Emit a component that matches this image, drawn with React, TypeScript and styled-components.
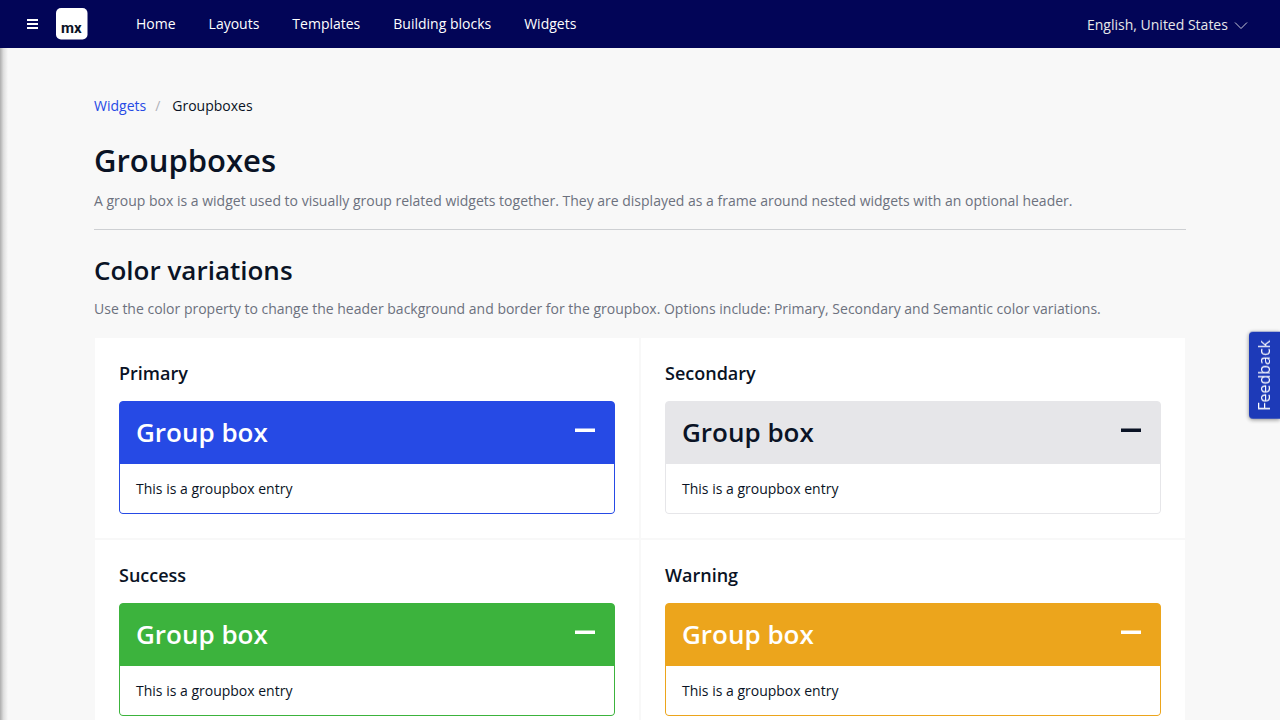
import React from 'react';
import styled, { createGlobalStyle } from 'styled-components';

const GlobalStyle = createGlobalStyle`
  *, *::before, *::after { box-sizing: border-box; }
  body {
    margin: 0;
    background: #f8f8f8;
    color: #0a1325;
    font-family: "Open Sans", "Noto Sans", sans-serif;
    font-size: 14px;
    line-height: 20px;
  }
  h1, h2, h3, h4, p, ol { margin: 0; padding: 0; }
  button, select { font: inherit; color: inherit; }
`;

const TopBar = styled.header`
  position: sticky;
  top: 0;
  z-index: 2;
  display: flex;
  align-items: center;
  height: 48px;
  padding: 0 32px 0 24px;
  background: #020557;
  color: #fff;
`;

const MenuButton = styled.button`
  display: flex;
  width: 16px;
  padding: 0;
  border: 0;
  background: none;
  justify-content: center;
`;

const HomeLink = styled.a`
  display: flex;
  margin: 0 32px 0 16px;
`;

const LogoText = styled.text`
  font-family: Roboto, sans-serif;
  font-size: 15px;
  font-weight: 700;
  fill: #0a1325;
`;

const Nav = styled.nav`
  display: flex;
  flex: 1;
  gap: 1px;
`;

const NavLink = styled.a`
  padding: 0 16px;
  color: #fff;
  text-decoration: none;
`;

const Language = styled.label`
  display: flex;
  align-items: center;
  gap: 6px;
  padding-top: 2px;
`;

const LanguageSelect = styled.select`
  appearance: none;
  padding: 0;
  border: 0;
  background: none;
  color: #e7e7e9;

  option { color: #0a1325; }
`;

const Body = styled.div`
  position: relative;
`;

const SidebarShadow = styled.div`
  position: absolute;
  inset: 0 auto 0 0;
  width: 8px;
  background: linear-gradient(to right, rgba(0, 0, 0, 0.3), rgba(0, 0, 0, 0.1) 45%, transparent);
`;

const Content = styled.main`
  max-width: 1140px;
  margin: 0 auto;
  padding: 48px 24px 24px;
`;

const Breadcrumb = styled.ol`
  display: flex;
  list-style: none;
  margin-bottom: 24px;
`;

const Crumb = styled.li`
  & + &::before {
    content: "/";
    padding: 0 12px 0 9px;
    color: #b0b2b8;
  }
`;

const CrumbLink = styled.a`
  color: #264ae5;
  text-decoration: none;
`;

const PageTitle = styled.h1`
  font-size: 31px;
  line-height: 40px;
  font-weight: 600;
`;

const SectionTitle = styled.h2`
  font-size: 26px;
  line-height: 35px;
  font-weight: 600;
`;

const Lead = styled.p`
  margin-top: 11px;
  color: #6c717e;
`;

const PageHead = styled.div`
  padding-bottom: 18px;
  margin-bottom: 23px;
  border-bottom: 1px solid #ced0d3;
`;

const Cards = styled.div`
  display: grid;
  grid-template-columns: repeat(2, minmax(0, 1fr));
  margin-top: 18px;
`;

const Card = styled.section`
  padding: 24px;
  border: 1px solid #f8f8f8;
  background: #fff;
`;

const CardTitle = styled.h3`
  margin-bottom: 16px;
  font-size: 18px;
  line-height: 23px;
  font-weight: 600;
`;

const Box = styled.div<{ $color: string }>`
  border: 1px solid ${(p) => p.$color};
  border-radius: 4px;
  background: ${(p) => p.$color};
  overflow: hidden;
`;

const BoxHeader = styled.button<{ $text: string }>`
  display: flex;
  justify-content: space-between;
  align-items: center;
  width: 100%;
  padding: 13px 16px 15px;
  border: 0;
  background: none;
  color: ${(p) => p.$text};
  font-size: 26px;
  line-height: 34px;
  font-weight: 600;
  text-align: left;
`;

const MinusIcon = styled.svg`
  margin: 0 3px 4px 0;
  fill: currentColor;
`;

const BoxBody = styled.p`
  padding: 15px 16px 14px;
  background: #fff;
`;

const Feedback = styled.button`
  position: fixed;
  right: 0;
  top: 332px;
  z-index: 3;
  padding: 8px 4px 8px 5px;
  border: 0;
  border-radius: 0 4px 4px 0;
  background: #1d3ab8;
  color: #fff;
  font-size: 16px;
  line-height: 22px;
  writing-mode: vertical-rl;
  transform: rotate(180deg);
  box-shadow: 0 -1px 4px rgba(0, 0, 0, 0.45);
`;

const links = ['Home', 'Layouts', 'Templates', 'Building blocks', 'Widgets'];

const variations = [
  { name: 'Primary', color: '#264ae5', text: '#fff' },
  { name: 'Secondary', color: '#e6e6e9', text: '#0a1325' },
  { name: 'Success', color: '#3cb33d', text: '#fff' },
  { name: 'Warning', color: '#eca51c', text: '#fff' },
];

function GroupBox({ color, text }: { color: string; text: string }) {
  const [open, setOpen] = React.useState(true);
  return (
    <Box $color={color}>
      <BoxHeader $text={text} aria-expanded={open} onClick={() => setOpen(!open)}>
        Group box
        <MinusIcon width="20" height="4" viewBox="0 0 20 4">
          <path d="M0 .5h20V4H0z" />
        </MinusIcon>
      </BoxHeader>
      {open && <BoxBody>This is a groupbox entry</BoxBody>}
    </Box>
  );
}

export default function App() {
  return (
    <>
      <GlobalStyle />
      <TopBar>
        <MenuButton aria-label="Toggle menu">
          <svg width="12" height="12" viewBox="0 0 12 12" fill="#fff">
            <path d="M1 1h11v2H1zM1 5h11v2H1zM1 9h11v2H1z" />
          </svg>
        </MenuButton>
        <HomeLink href="#" aria-label="Mendix">
          <svg width="32" height="32" viewBox="0 0 32 32">
            <rect width="31.5" height="31.5" rx="5" fill="#fff" />
            <LogoText x="5" y="25">mx</LogoText>
          </svg>
        </HomeLink>
        <Nav>
          {links.map((l) => (
            <NavLink key={l} href="#">{l}</NavLink>
          ))}
        </Nav>
        <Language>
          <LanguageSelect aria-label="Language">
            <option>English, United States</option>
          </LanguageSelect>
          <svg width="14" height="14" viewBox="0 0 14 14" fill="none" stroke="#c8c9d8">
            <path d="M1 4.5l6 6 6-6" />
          </svg>
        </Language>
      </TopBar>
      <Body>
        <SidebarShadow />
        <Content>
          <Breadcrumb>
            <Crumb><CrumbLink href="#">Widgets</CrumbLink></Crumb>
            <Crumb>Groupboxes</Crumb>
          </Breadcrumb>
          <PageHead>
            <PageTitle>Groupboxes</PageTitle>
            <Lead>
              A group box is a widget used to visually group related widgets together. They are displayed as a frame
              around nested widgets with an optional header.
            </Lead>
          </PageHead>
          <SectionTitle>Color variations</SectionTitle>
          <Lead>
            Use the color property to change the header background and border for the groupbox. Options include:
            Primary, Secondary and Semantic color variations.
          </Lead>
          <Cards>
            {variations.map((v) => (
              <Card key={v.name}>
                <CardTitle>{v.name}</CardTitle>
                <GroupBox color={v.color} text={v.text} />
              </Card>
            ))}
          </Cards>
        </Content>
      </Body>
      <Feedback>Feedback</Feedback>
    </>
  );
}
